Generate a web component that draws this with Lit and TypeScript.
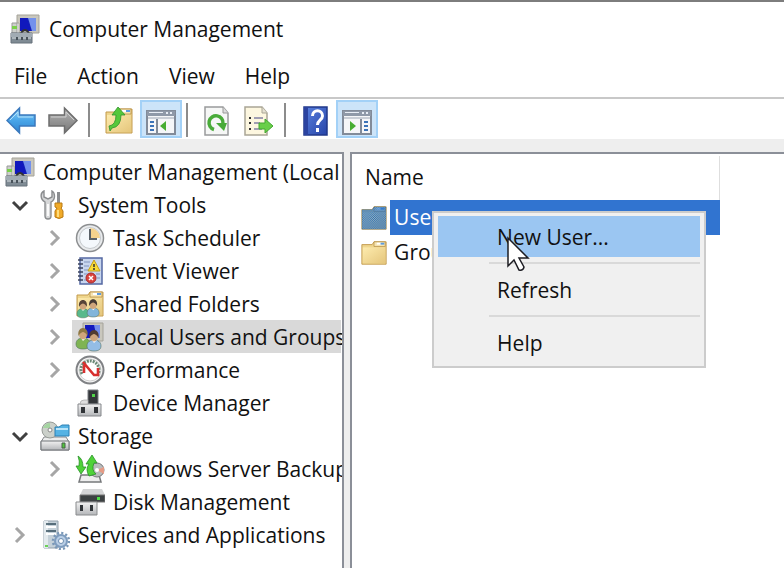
import { LitElement, html, svg, css, nothing, TemplateResult } from "lit";
import { customElement, property, state } from "lit/decorators.js";
import { classMap } from "lit/directives/class-map.js";

const monitor = svg`
  <path d="M7 1h22v18H9V9H7z" fill="#c9c7bd" stroke="#a5a39a"/>
  <path d="M10 4h16v13H10z" fill="#1522b8"/>
  <path d="M18 4h8v13h-4z" fill="#7391ec"/>
  <path d="M10 4h7l4 13H10z" fill="#1018bd"/>
  <path d="M2 9h5v10H2z" fill="#cdd0cb" stroke="#999"/>
  <path d="M2 12h5v3H2z" fill="#7ad04b"/>`;

const person = (x: number, y: number, hair: string, shirt: string) => svg`
  <g transform="translate(${x} ${y})">
    <path d="M0 14c0-4 3-6 7-6s7 2 7 6c0 3-2 5-7 5s-7-2-7-5z" fill=${shirt} stroke="#51705f" stroke-width=".6"/>
    <path d="M5 8l2 3 3-3z" fill="#fff"/>
    <ellipse cx="7" cy="4.500" rx="4" ry="5" fill="#cfa57c"/>
    <path d="M2.500 6C1.500 1 4-2 7-2s5.500 3 4.500 8C10 3 8 2 7 2S4 3 2.500 6z" fill=${hair}/>
  </g>`;

const folder = svg`
  <path d="M2 6h11l2-3h13v24H2z" fill="#efd68d" stroke="#c39a4d"/>
  <path d="M15 3h12v5H15z" fill="#f6e5b3" stroke="#b78f47" stroke-width=".8"/>
  <path d="M18 4h5v2h-5z" fill="#fff"/><path d="M22 4h4v2h-4z" fill="#5d9be0"/>
  <path d="M3 9h24v17H3z" fill="url(#fold)"/>`;

const defs = svg`<defs>
  <linearGradient id="fold" x1="0" y1="0" x2="1" y2="1"><stop offset="0" stop-color="#fdebae"/><stop offset="1" stop-color="#e5c67c"/></linearGradient>
  <linearGradient id="blue" x1="0" y1="0" x2="0" y2="1"><stop offset="0" stop-color="#8fd2f8"/><stop offset=".5" stop-color="#49a5e8"/><stop offset="1" stop-color="#2e83d0"/></linearGradient>
  <linearGradient id="grey" x1="0" y1="0" x2="0" y2="1"><stop offset="0" stop-color="#b5b5b5"/><stop offset="1" stop-color="#777"/></linearGradient>
  <linearGradient id="book" x1="0" y1="0" x2="1" y2="1"><stop offset="0" stop-color="#5b83e0"/><stop offset="1" stop-color="#2644a8"/></linearGradient>
  <linearGradient id="metal" x1="0" y1="0" x2="0" y2="1"><stop offset="0" stop-color="#f2f2f2"/><stop offset="1" stop-color="#b4b6b9"/></linearGradient>
  <pattern id="dots" width="2" height="2" patternUnits="userSpaceOnUse"><path d="M0 0h1v1H0zM1 1h1v1H1z" fill="#1668c8"/></pattern>
</defs>`;

const windowFrame = svg`
  <path d="M1 5h28v23H1z" fill="#f5f6f8" stroke="#828b99" stroke-width="2"/>
  <path d="M1 5h28v5H1z" fill="#8f99a8"/>
  <path d="M20 6h2v2h-2zM24 6h2v2h-2zM3 6h14v1H3z" fill="#e8edf5"/>
  <path d="M2 11h26v2H2z" fill="#c9ced6"/>`;

const icons: Record<string, TemplateResult> = {
  computer: svg`${monitor}
    <path d="M11 19q4-6 8 0" fill="none" stroke="#333" stroke-width="2"/>
    <path d="M1 19h21v10H1z" fill="#7f8b94" stroke="#66717a"/>
    <path d="M1 19h21v4H1z" fill="#a1abb3"/>
    <path d="M2 24h19" stroke="#dbe0e3"/><path d="M7 23v3M12 23v3M17 23v3" stroke="#48525a" stroke-width="2"/>`,
  tools: svg`
    <path d="M3 1v6l4 2 4-2V1c3 2 4 8-1 11v14c0 4-6 4-6 0V12C-1 9-1 3 3 1z" transform="translate(1)" fill="#d6d7d8" stroke="#8b8d8f" stroke-width="1.400"/>
    <path d="M8 14v12" stroke="#fafafa" stroke-width="2"/>
    <path d="M17 2h3v12h-3z" fill="#8c8e91"/><path d="M15 13h7v4l-1 1 2 3v6q-4 3-8 0v-6l2-3-2-1z" fill="#f0aa28" stroke="#b97a14"/>
    <path d="M18 20v7" stroke="#ffdc7b" stroke-width="2"/>`,
  clock: svg`
    <circle cx="15" cy="15" r="13.500" fill="#e9ebed" stroke="#8d8f91" stroke-width="1.500"/>
    <circle cx="15" cy="15" r="10.500" fill="#f4f8fc" stroke="#c5c9cc"/>
    <path d="M15 15V5a10 10 0 0 1 10 10z" fill="#f5d28d"/>
    <path d="M15 6v10h7" fill="none" stroke="#5a6168" stroke-width="2"/>`,
  event: svg`
    <path d="M5 2h22v26H5z" fill="#c8d6ee" stroke="#5468a2" stroke-width="1.500"/>
    <path d="M9 6h6M9 10h5M9 14h5M9 18h4M21 18h4M22 22h3M9 24h5" stroke="#8094bd"/>
    <path d="M3 4h5M3 8h5M3 12h5M3 16h5M3 20h5M3 24h5" stroke="#3b435c" stroke-width="1.500"/>
    <path d="m19 4 6 11H13z" fill="#f9dc38" stroke="#c49e1e"/><path d="M19 8v3m0 1v2" stroke="#333" stroke-width="1.500"/>
    <circle cx="16" cy="22" r="5" fill="#da433c" stroke="#a92a2b"/><path d="m14 20 4 4m0-4-4 4" stroke="#fff" stroke-width="1.500"/>`,
  shared: svg`${folder}
    <g transform="translate(2 11) scale(.85)">${person(0, 2, "#574338", "#58b98c")}${person(12, 1, "#463a35", "#82b5da")}</g>`,
  users: svg`
    <path d="M8 1h20v18H8z" fill="#c9c7bd" stroke="#a5a39a"/><path d="M10 3h15v13H10z" fill="#1319bd"/><path d="M19 3h6v13h-3z" fill="#748eea"/>
    ${person(1, 8, "#8f7844", "#7fb453")}${person(12, 10, "#513b31", "#94bde5")}`,
  performance: svg`
    <circle cx="15" cy="15" r="13.500" fill="#f6f6f6" stroke="#808285" stroke-width="2"/>
    <circle cx="15" cy="15" r="11" fill="#fff" stroke="#cfcfcf"/>
    <path d="M7 19a9 9 0 1 1 16 0" fill="none" stroke="#6b8a77" stroke-width="3" stroke-dasharray="2 1"/>
    <path d="m8 7 11 13h4v-7M9 10v8" fill="none" stroke="#d82f2e" stroke-width="2.600"/>`,
  device: svg`
    <path d="M13 2h10v14H13z" fill="#34373a" stroke="#767a7e"/><path d="M17 6h3v3h-3z" fill="#51d449"/>
    <path d="M3 16h23v12H3z" fill="url(#metal)" stroke="#85878b"/><path d="M6 19h4v6H6zM19 19h4v6h-4z" fill="#303337"/><path d="M5 16q0-4 4-4h4v4z" fill="#dedede" stroke="#999" stroke-width=".6"/>`,
  storage: svg`
    <path d="m4 16 22 0 3 5v8H1v-8z" fill="#eceded" stroke="#85888b"/>
    <circle cx="10" cy="9" r="8" fill="#cbd0ca" stroke="#979c98"/><path d="M3 7q2-5 7-5l0 5z" fill="#a5d5a1"/><circle cx="10" cy="9" r="2" fill="#fff" stroke="#888"/>
    <path d="M15 6h4l3-2h7v11H15z" fill="#55b3e4" stroke="#2c80b4"/><path d="M16 8h12" stroke="#b9e5fa" stroke-width="2"/>
    <path d="M1 20h28v9H1z" fill="url(#metal)" stroke="#6f7376"/><path d="M22 22h3v5h-3z" fill="#50c63b" stroke="#48604a"/>`,
  backup: svg`
    <path d="M6 21h18l2 7H4z" fill="#eee" stroke="#77797b" stroke-width="1.500"/>
    <circle cx="22" cy="16" r="7" fill="#b9bbbc" stroke="#77797b"/><path d="m22 16 7-3v7z" fill="#e69b85"/><circle cx="22" cy="16" r="2" fill="#fff"/>
    <path d="M3 2q5 3 5 11h3l-5 7-5-8h3Q5 7 3 2z" fill="#4fd238" stroke="#29912a" stroke-width=".8"/>
    <path d="M14 22q-4-7 0-12h-3l6-9 5 8h-3q-3 7 2 11z" fill="#4fd238" stroke="#29912a" stroke-width=".8"/>`,
  disk: svg`
    <path d="M8 2h19l3 6H5z" fill="#d4d5d6"/><path d="M5 8h25v7H5z" fill="#3c4142" stroke="#777"/><path d="M22 10h3v3h-3z" fill="#4dde45"/>
    <path d="M1 15h21v13H1z" fill="url(#metal)" stroke="#898b8d"/><path d="M5 18h3v6H5zM15 18h3v6h-3z" fill="#303438"/>`,
  services: svg`
    <path d="M4 1h14v27H4z" fill="#c5d1d9" stroke="#93a1ac"/><path d="M4 1h4v27H4z" fill="#e3eaee"/>
    <path d="M6 4h10M6 11h10" stroke="#334d5c" stroke-width="1.500"/><path d="M6 7h10M6 14h10" stroke="#fff" stroke-width="2"/><path d="M5 25h3v2H5z" fill="#6bd158"/>
    <circle cx="21" cy="21" r="6" fill="#b9cee5" stroke="#7f9dbf" stroke-width="2"/>
    <circle cx="21" cy="21" r="8" fill="none" stroke="#7997b7" stroke-width="2.500" stroke-dasharray="2.100 2.088"/><circle cx="21" cy="21" r="2.500" fill="#fff" stroke="#6c8db0"/>`,
  back: svg`<path d="M13.500 2v7H29v11H13.500v7L1 14.500z" fill="url(#blue)" stroke="#3b79bd" stroke-width="1.500"/><path d="M4 14 12 6v5h15" fill="none" stroke="#b3e2fb"/>`,
  forward: svg`<path d="M16.500 2v7H1v11h15.500v7L29 14.500z" fill="url(#grey)" stroke="#6d6d6d" stroke-width="1.500"/><path d="M3 11h15V6l8 8" fill="none" stroke="#d0d0d0"/>`,
  up: svg`${folder}<path d="M5 20q7-1 7-11H8l6-8 7 8h-4q0 12-9 13l-2 3z" fill="#55c83b" stroke="#2f922d" stroke-width=".8"/>`,
  treePane: svg`${windowFrame}<path d="M11 13v14" stroke="#828b99" stroke-width="2"/><path d="M4 16h4M4 20h4M4 24h4" stroke="#3c73b8" stroke-width="2"/><path d="M20 15v10l-6-5z" fill="#47ad32"/>`,
  actionPane: svg`${windowFrame}<path d="M19 13v14" stroke="#828b99" stroke-width="2"/><path d="M22 16h4M22 20h4M22 24h4" stroke="#3c73b8" stroke-width="2"/><path d="M8 15v10l6-5z" fill="#47ad32"/>`,
  refresh: svg`<path d="M3 1h18l5 6v22H3z" fill="#f6f7f6" stroke="#999b9c" stroke-width="1.500"/><path d="M21 1v6h5" fill="#ddd" stroke="#999"/>
    <path d="M12 23.500a7 7 0 1 1 9-6" fill="none" stroke="#49ab39" stroke-width="3.500"/><path d="m14 17 11 0-3 8z" fill="#49ab39"/>`,
  exportList: svg`<path d="M1 1h17l5 6v22H1z" fill="#fdf7e0" stroke="#a9a595" stroke-width="1.500"/><path d="M18 1v6h5" fill="#e5e1d2" stroke="#a9a595"/>
    <path d="M5 12h2M5 17h2M5 23h2" stroke="#333" stroke-width="2"/><path d="M10 12h9M10 17h6M10 23h8" stroke="#8381a3" stroke-width="1.500"/>
    <path d="M15 17h6v-4l8 7-8 7v-4h-6z" fill="#69cf49" stroke="#44a733"/>`,
  help: svg`<path d="M4 1h23v28H4z" fill="url(#book)" stroke="#21398a" stroke-width="1.500"/><path d="M4 1h4v28H4z" fill="#2b43a0"/>
    <path d="M12.500 10c0-7 10-7 10 0 0 4-5 4-5 9" fill="none" stroke="#fff" stroke-width="3"/><path d="M16 22h3v4h-3z" fill="#fff"/>`,
  folder,
  folderSelected: svg`${folder}<path d="M2 6h11l2-3h13v24H2z" fill="#3a7fc4" opacity=".35"/><path d="M2 6h11l2-3h13v24H2z" fill="url(#dots)"/>`,
};

const icon = (name: string) =>
  html`<svg class="icon" viewBox="0 0 30 30" aria-hidden="true">${defs}${icons[name]}</svg>`;

interface TreeItem {
  label: string;
  icon: string;
  open?: boolean;
  leaf?: boolean;
  children?: TreeItem[];
}

const tree: TreeItem[] = [
  {
    label: "System Tools", icon: "tools", open: true,
    children: [
      { label: "Task Scheduler", icon: "clock" },
      { label: "Event Viewer", icon: "event" },
      { label: "Shared Folders", icon: "shared" },
      { label: "Local Users and Groups", icon: "users" },
      { label: "Performance", icon: "performance" },
      { label: "Device Manager", icon: "device", leaf: true },
    ],
  },
  {
    label: "Storage", icon: "storage", open: true,
    children: [
      { label: "Windows Server Backup", icon: "backup" },
      { label: "Disk Management", icon: "disk", leaf: true },
    ],
  },
  { label: "Services and Applications", icon: "services" },
];

const controls = css`
  * { box-sizing: border-box; }
  button { font: inherit; color: inherit; background: none; border: 0; padding: 0; margin: 0; text-align: left; white-space: nowrap; }
  .icon { display: block; width: 30px; height: 30px; flex: none; }
`;

@customElement("console-toolbar")
export class ConsoleToolbar extends LitElement {
  static styles = [controls, css`
    :host { display: flex; align-items: center; height: 40px; background: #fff; }
    .tool { display: flex; align-items: center; justify-content: center; width: 42px; height: 38px; padding-top: 4px; }
    .on { background: #cce4f9; border: 2px solid #a3d1f7; }
    .divider { width: 2px; height: 34px; margin: 2px 8px 0 4px; background: #8c8c8c; }
  `];

  private tool(name: string, label: string, variant = "") {
    return html`<button class="tool ${variant}" aria-label=${label}>${icon(name)}</button>`;
  }

  render() {
    return html`
      ${this.tool("back", "Back")}
      ${this.tool("forward", "Forward")}
      <span class="divider"></span>
      ${this.tool("up", "Up one level")}
      ${this.tool("treePane", "Show or hide console tree", "on")}
      <span class="divider"></span>
      ${this.tool("refresh", "Refresh")}
      ${this.tool("exportList", "Export list")}
      <span class="divider"></span>
      ${this.tool("help", "Help")}
      ${this.tool("actionPane", "Show or hide action pane", "on")}
    `;
  }
}

@customElement("console-tree")
export class ConsoleTree extends LitElement {
  @state() private selected = "Local Users and Groups";

  static styles = [controls, css`
    :host { display: block; overflow: hidden; padding: 1px 1px 0 2px; background: #fff; }
    ul { list-style: none; margin: 0; padding: 0; }
    ul ul ul { padding-left: 35px; }
    .row { display: flex; height: 33px; }
    .toggle { flex: none; width: 35px; display: flex; align-items: center; justify-content: center; }
    .chevron { width: 18px; height: 18px; fill: none; stroke: #a6a6a6; stroke-width: 3; }
    .open .chevron { stroke: #404040; }
    .item { flex: 1; min-width: 0; display: flex; align-items: center; gap: 8px; padding-left: 3px; }
    .selected { background: #d9d9d9; }
  `];

  private item(label: string, name: string) {
    return html`<button class=${classMap({ item: true, selected: label === this.selected })}
      @click=${() => (this.selected = label)}>${icon(name)}<span>${label}</span></button>`;
  }

  private branch(node: TreeItem): TemplateResult {
    return html`<li role="treeitem">
      <div class="row">
        ${node.leaf
          ? html`<span class="toggle"></span>`
          : html`<button class=${classMap({ toggle: true, open: !!node.open })} aria-label="Toggle ${node.label}">
              <svg class="chevron" viewBox="0 0 18 18"><path d=${node.open ? "M2 6l7 7 7-7" : "M5 2l7 7-7 7"}></path></svg>
            </button>`}
        ${this.item(node.label, node.icon)}
      </div>
      ${node.children ? html`<ul role="group">${node.children.map((c) => this.branch(c))}</ul>` : nothing}
    </li>`;
  }

  render() {
    return html`<ul role="tree">
      <li role="treeitem">
        <div class="row">${this.item("Computer Management (Local", "computer")}</div>
        <ul role="group">${tree.map((n) => this.branch(n))}</ul>
      </li>
    </ul>`;
  }
}

@customElement("context-menu")
export class ContextMenu extends LitElement {
  @property({ attribute: false }) items: string[] = [];

  static styles = [controls, css`
    :host { display: block; padding: 3px 4px; background: #f0f0f0; border: 2px solid #cccccc; }
    .entry { display: block; width: 100%; height: 41px; padding-left: 59px; }
    .hot { background: #9bc6f2; }
    hr { height: 2px; margin: 5px 0 5px 51px; border: 0; background: #d9d9d9; }
    .pointer { position: absolute; left: 72px; top: 22px; width: 24px; height: 38px; }
  `];

  render() {
    return html`
      ${this.items.map((label, i) => html`
        ${i ? html`<hr>` : nothing}
        <button class=${classMap({ entry: true, hot: i === 0 })} role="menuitem">${label}</button>`)}
      <svg class="pointer" viewBox="0 0 24 38" aria-hidden="true">
        <path d="M2 3v28l6-6 5 10q4 1 5-3l-5-9h9z" fill="#fff" stroke="#1c1c22" stroke-width="1.500"></path>
      </svg>`;
  }
}

@customElement("app-root")
export class AppRoot extends LitElement {
  static styles = [controls, css`
    :host { box-sizing: border-box; display: flex; flex-direction: column; min-height: 100vh; overflow: hidden; background: #eeeeee; color: #111; font: 21px/32px "Open Sans", "Noto Sans", sans-serif; border-top: 2px solid #7d7d7d; }
    header { display: flex; align-items: center; gap: 9px; height: 54px; padding-left: 10px; background: #fff; }
    h1 { margin: 0; font: inherit; }
    nav { display: flex; gap: 30px; height: 43px; padding: 4px 14px 0; background: #fff; border-bottom: 2px solid #c8c8c8; }
    nav button { height: 32px; }
    main { flex: 1; display: grid; grid-template-columns: minmax(0, 23fr) minmax(0, 29fr); gap: 6px; margin-top: 13px; }
    console-tree { border: solid #8b8f98; border-width: 2px 2px 0 0; }
    .details { position: relative; background: #fff; border: solid #8b8f98; border-width: 2px 0 0 2px; padding: 2px 0 0 8px; }
    table { border-collapse: collapse; table-layout: fixed; width: 360px; }
    th, td { padding: 0; font-weight: normal; text-align: left; }
    th { height: 44px; padding: 0 0 2px 5px; border-right: 1px solid #dedede; }
    td { height: 35px; }
    .entry { display: flex; width: 100%; height: 35px; gap: 2px; align-items: center; }
    .name { flex: 1; height: 35px; padding: 1px 4px; }
    .chosen .name { background: #3174d0; color: #fff; }
    .details .icon { width: 28px; height: 28px; }
    context-menu { position: absolute; left: 80px; top: 57px; width: 274px; }
  `];

  render() {
    return html`
      <header>${icon("computer")}<h1>Computer Management</h1></header>
      <nav>${["File", "Action", "View", "Help"].map((m) => html`<button>${m}</button>`)}</nav>
      <console-toolbar></console-toolbar>
      <main>
        <console-tree></console-tree>
        <section class="details">
          <table>
            <thead><tr><th scope="col">Name</th></tr></thead>
            <tbody>
              <tr class="chosen"><td><button class="entry">${icon("folderSelected")}<span class="name">Users</span></button></td></tr>
              <tr><td><button class="entry">${icon("folder")}<span class="name">Groups</span></button></td></tr>
            </tbody>
          </table>
          <context-menu role="menu" .items=${["New User...", "Refresh", "Help"]}></context-menu>
        </section>
      </main>`;
  }
}
